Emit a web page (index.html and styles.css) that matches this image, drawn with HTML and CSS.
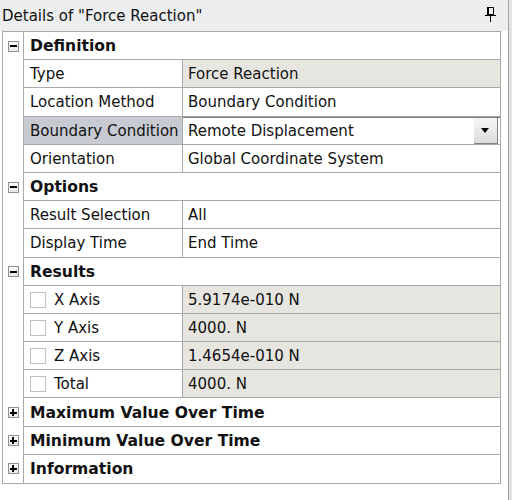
FILE: index.html
```html
<!DOCTYPE html>
<html lang="en">
<head>
  <meta charset="UTF-8">
  <title>Details of "Force Reaction"</title>
  <link rel="stylesheet" href="styles.css">
</head>
<body>
  <div class="panel">
    <div class="titlebar">
      <span class="title">Details of "Force Reaction"</span>
      <svg class="pin" width="11" height="15" viewBox="0 0 11 15">
        <path d="M2.5 0.5h6v7h-6z" fill="none" stroke="#000"/>
        <path d="M2 0h2v8h-2z" fill="#000"/>
        <path d="M0 8h11v1h-11z" fill="#000"/>
        <path d="M5 9h1v6h-1z" fill="#000"/>
      </svg>
    </div>

    <div class="grid">
      <div class="row">
        <div class="gutter"><span class="toggle"></span></div>
        <div class="cell head">Definition</div>
      </div>
      <div class="row">
        <div class="gutter"></div>
        <div class="cell name">Type</div>
        <div class="cell value readonly">Force Reaction</div>
      </div>
      <div class="row">
        <div class="gutter"></div>
        <div class="cell name">Location Method</div>
        <div class="cell value">Boundary Condition</div>
      </div>
      <div class="row">
        <div class="gutter"></div>
        <div class="cell name selected">Boundary Condition</div>
        <div class="cell value editing">
          Remote Displacement
          <span class="drop"></span>
        </div>
      </div>
      <div class="row">
        <div class="gutter"></div>
        <div class="cell name">Orientation</div>
        <div class="cell value">Global Coordinate System</div>
      </div>

      <div class="row">
        <div class="gutter"><span class="toggle"></span></div>
        <div class="cell head">Options</div>
      </div>
      <div class="row">
        <div class="gutter"></div>
        <div class="cell name">Result Selection</div>
        <div class="cell value">All</div>
      </div>
      <div class="row">
        <div class="gutter"></div>
        <div class="cell name">Display Time</div>
        <div class="cell value">End Time</div>
      </div>

      <div class="row">
        <div class="gutter"><span class="toggle"></span></div>
        <div class="cell head">Results</div>
      </div>
      <div class="row">
        <div class="gutter"></div>
        <div class="cell name"><span class="check"></span>X Axis</div>
        <div class="cell value readonly">5.9174e-010 N</div>
      </div>
      <div class="row">
        <div class="gutter"></div>
        <div class="cell name"><span class="check"></span>Y Axis</div>
        <div class="cell value readonly">4000. N</div>
      </div>
      <div class="row">
        <div class="gutter"></div>
        <div class="cell name"><span class="check"></span>Z Axis</div>
        <div class="cell value readonly">1.4654e-010 N</div>
      </div>
      <div class="row">
        <div class="gutter"></div>
        <div class="cell name"><span class="check"></span>Total</div>
        <div class="cell value readonly">4000. N</div>
      </div>

      <div class="row">
        <div class="gutter"><span class="toggle closed"></span></div>
        <div class="cell head">Maximum Value Over Time</div>
      </div>
      <div class="row">
        <div class="gutter"><span class="toggle closed"></span></div>
        <div class="cell head">Minimum Value Over Time</div>
      </div>
      <div class="row">
        <div class="gutter"><span class="toggle closed"></span></div>
        <div class="cell head">Information</div>
      </div>
    </div>
  </div>
</body>
</html>
```

FILE: styles.css
```css
body {
  margin: 0;
  background: #e4e4e4;
  font-family: "DejaVu Sans", sans-serif;
  font-size: 15px;
  color: #111;
}
.panel {
  width: 509px;
  height: 500px;
  background: #fff;
  border-right: 1px solid #a0a0a0;
  box-sizing: border-box;
}
.titlebar {
  height: 31px;
  display: flex;
  align-items: center;
  justify-content: space-between;
  padding: 1px 12px 0 2px;
  box-sizing: border-box;
  background: #eceef0;
}
.pin {
  margin-top: -4px;
}
.grid {
  width: 499px;
  margin-left: 2px;
  border: 1px solid #a9a9a9;
  box-sizing: border-box;
}
.row {
  display: grid;
  grid-template-columns: 21px 159px 1fr;
  height: 28.2px;
}
.gutter {
  border-right: 1px solid #a9a9a9;
  display: flex;
  align-items: center;
  justify-content: center;
}
.cell {
  display: flex;
  align-items: center;
  padding-top: 1px;
  border-bottom: 1px solid #a9a9a9;
  white-space: nowrap;
}
.row:last-child .cell {
  border-bottom: 0;
}
.head {
  grid-column: 2 / 4;
  padding-left: 6px;
  font-weight: bold;
  font-size: 15.6px;
}
.name {
  padding-left: 6px;
  border-right: 1px solid #a9a9a9;
}
.name.selected {
  background: #c8cad2;
}
.value {
  padding-left: 5px;
}
.value.readonly {
  background: #e7e5e0;
}
.value.editing {
  position: relative;
  box-shadow: inset 0 1px 0 #7a7a7a;
}
/* combo box arrow */
.drop {
  position: absolute;
  right: 2px;
  top: 1px;
  bottom: 0;
  width: 24px;
  background: linear-gradient(#f6f6f6, #dcdcdc);
  border-right: 1px solid #808080;
  border-bottom: 1px solid #808080;
  box-sizing: border-box;
}
.drop::after {
  content: "";
  position: absolute;
  left: 7px;
  top: 10px;
  border-left: 4px solid transparent;
  border-right: 4px solid transparent;
  border-top: 5px solid #000;
}
.toggle {
  position: relative;
  width: 11px;
  height: 11px;
  border: 1px solid #909090;
  background: linear-gradient(#fff, #e8e8e8);
  box-sizing: border-box;
}
.toggle::before,
.toggle.closed::after {
  content: "";
  position: absolute;
  background: #000;
}
.toggle::before {
  left: 1px;
  top: 3.5px;
  width: 7px;
  height: 2px;
}
.toggle.closed::after {
  left: 3.5px;
  top: 1px;
  width: 2px;
  height: 7px;
}
.check {
  width: 16px;
  height: 16px;
  margin-right: 8px;
  border: 1px solid #c2c2c2;
  background: #fff;
  box-sizing: border-box;
}
```
